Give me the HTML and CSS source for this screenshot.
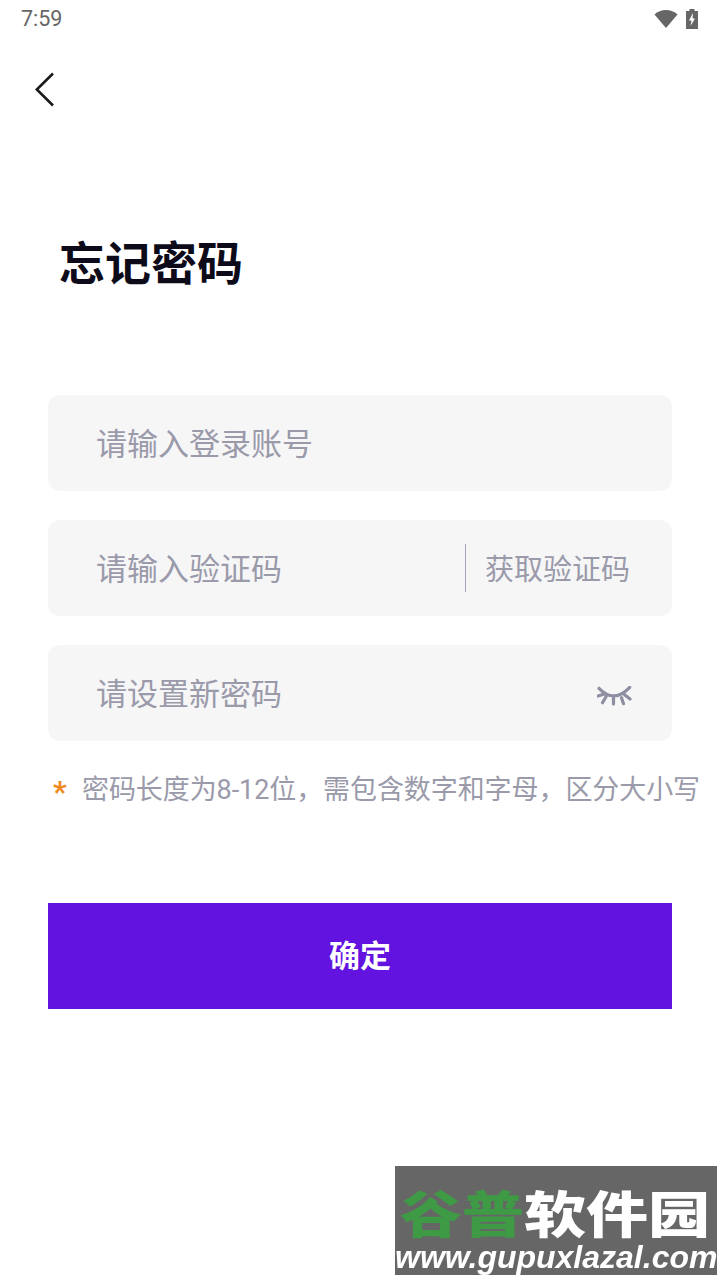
FILE: index.html
```html
<!DOCTYPE html>
<html lang="zh-CN">
<head>
  <meta charset="UTF-8">
  <meta name="viewport" content="width=device-width, initial-scale=1.0">
  <title>忘记密码</title>
  <link rel="stylesheet" href="styles.css">
</head>
<body>
  <div class="status-bar">
    <span class="time">7:59</span>
    <div class="status-icons">
      <svg width="24" height="20" viewBox="0 0 24 20"><path d="M0.500 5.500C3.500 2.500 7.500 1 12 1s8.500 1.500 11.500 4.500L12 19z" fill="#666"/></svg>
      <svg width="14" height="20" viewBox="0 0 14 20"><path d="M4.500 0h5v2H13v18H1V2h3.500z" fill="#666"/><path d="M8 4L4 11.500h2.500L5.500 17 10 9.500H7.500z" fill="#fff"/></svg>
    </div>
  </div>

  <div class="nav">
    <svg class="back" width="20" height="36" viewBox="0 0 20 36"><path d="M18 1.500L1.800 17.500 18 33.500" fill="none" stroke="#1a1a1a" stroke-width="2.600"/></svg>
  </div>

  <h1 class="title">忘记密码</h1>

  <form class="form">
    <div class="field"><span class="placeholder">请输入登录账号</span></div>
    <div class="field">
      <span class="placeholder">请输入验证码</span>
      <span class="get-code">获取验证码</span>
    </div>
    <div class="field">
      <span class="placeholder">请设置新密码</span>
      <svg class="eye" width="36" height="20" viewBox="0 0 36 20">
        <path d="M2 2.300Q17 18 32.700 1.300M1 10L7.500 8M5.500 16.700L9 10.700M16.500 18V12M26.500 17.700L24.500 11.700M33 13L27 8.300" fill="none" stroke="#8e8ea2" stroke-width="3.200" stroke-linecap="round"/>
      </svg>
    </div>
    <p class="tip"><span class="star">*</span><span class="tip-text">密码长度为8-12位，需包含数字和字母，区分大小写</span></p>
    <button class="submit" type="button">确定</button>
  </form>

  <div class="watermark">
    <div class="wm-name"><span class="wm-green">谷普</span><span>软件园</span></div>
    <div class="wm-url">www.gupuxlazal.com</div>
  </div>
</body>
</html>
```

FILE: styles.css
```css
html, body {
  margin: 0;
  padding: 0;
}
body {
  position: relative;
  width: 720px;
  height: 1280px;
  overflow: hidden;
  background: #fff;
  font-family: "Roboto", "Noto Sans CJK SC", sans-serif;
}
.status-bar {
  display: flex;
  justify-content: space-between;
  align-items: center;
  height: 37px;
  padding: 0 21px;
}
.time {
  font-size: 21.500px;
  color: #666;
}
.status-icons {
  display: flex;
  align-items: center;
  gap: 7px;
}
.nav {
  height: 70px;
  margin-top: 18px;
  padding-left: 35px;
  display: flex;
  align-items: center;
}
.title {
  margin: 109px 0 0 59px;
  font-size: 46px;
  line-height: 60px;
  font-weight: 700;
  color: #0d0b1a;
}
.form {
  margin: 101px 48px 0;
  width: 624px;
}
.field {
  display: flex;
  align-items: center;
  height: 96px;
  margin-bottom: 29px;
  padding: 0 39px 0 48px;
  box-sizing: border-box;
  background: #f6f6f7;
  border-radius: 12px;
  font-size: 31px;
  color: #9a9aaa;
}
.placeholder {
  flex: 1;
  padding-bottom: 4px;
}
.get-code {
  height: 48px;
  line-height: 52px;
  padding-left: 19px;
  margin-right: 3px;
  border-left: 1px solid #a5a5c0;
  font-size: 29px;
}
.eye {
  display: block;
  margin-top: 5px;
}
.tip {
  display: flex;
  align-items: center;
  margin: 30px -30px 0 5px;
  height: 32px;
  font-size: 27px;
  white-space: nowrap;
  color: #9a9aaa;
}
.tip-text {
  margin-left: -1px;
  letter-spacing: -0.080px;
}
.star {
  width: 30px;
  font-size: 30px;
  font-weight: 700;
  line-height: 32px;
  padding-top: 9px;
  color: #f08a1d;
}
.submit {
  display: block;
  width: 100%;
  height: 106px;
  margin-top: 100px;
  padding: 0 0 6px;
  border: 0;
  background: #6213e0;
  color: #fff;
  font-family: inherit;
  font-size: 31px;
  font-weight: 700;
}
.watermark {
  position: absolute;
  left: 395px;
  top: 1166px;
  width: 322px;
  height: 109px;
  background: #666;
  color: #fff;
  font-family: "Noto Sans CJK SC", sans-serif;
  font-weight: 900;
  overflow: hidden;
  filter: blur(0.6px);
}
.wm-name {
  height: 52px;
  padding: 20px 0 0 4px;
  font-size: 50px;
  line-height: 50px;
  white-space: nowrap;
  transform: scaleX(1.24);
  transform-origin: left center;
}
.wm-green {
  color: #3f9a45;
}
.wm-url {
  font-family: "Liberation Sans", sans-serif;
  font-size: 32px;
  font-style: italic;
  line-height: 38px;
  font-weight: 700;
  white-space: nowrap;
}
```
